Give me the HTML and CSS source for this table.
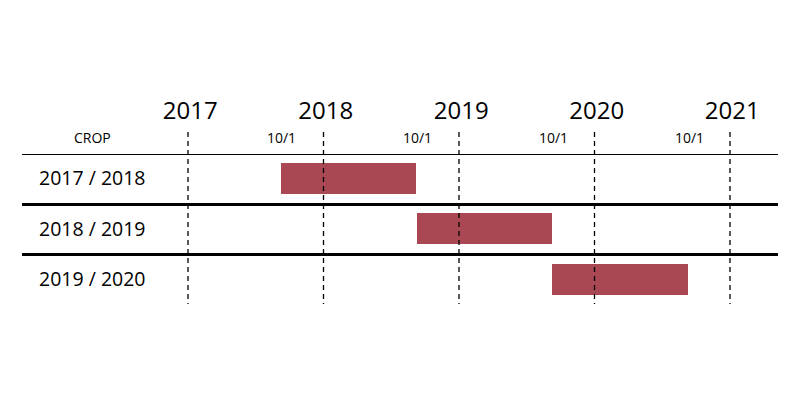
FILE: index.html
```html
<!DOCTYPE html>
<html>
<head>
<meta charset="utf-8">
<link rel="stylesheet" href="styles.css">
</head>
<body>
<div class="chart">
  <div class="header">
    <div class="years">
      <span class="year">2017</span>
      <span class="year">2018</span>
      <span class="year">2019</span>
      <span class="year">2020</span>
      <span class="year">2021</span>
    </div>
    <div class="sub">
      <span class="crop">CROP</span>
      <div class="marks">
        <span class="mark">10/1</span>
        <span class="mark">10/1</span>
        <span class="mark">10/1</span>
        <span class="mark">10/1</span>
      </div>
    </div>
  </div>
  <div class="row">
    <div class="label">2017 / 2018</div>
    <div class="track"><div class="bar" style="margin-left:92.7px"></div></div>
  </div>
  <div class="row">
    <div class="label">2018 / 2019</div>
    <div class="track"><div class="bar" style="margin-left:228.6px"></div></div>
  </div>
  <div class="row last">
    <div class="label">2019 / 2020</div>
    <div class="track"><div class="bar" style="margin-left:364.3px"></div></div>
  </div>
  <svg class="grid" width="600" height="172" viewBox="0 0 600 172">
    <g stroke="#000" stroke-width="1.3" stroke-dasharray="5 4">
      <line x1="1" y1="0" x2="1" y2="172"/>
      <line x1="136.5" y1="0" x2="136.5" y2="172"/>
      <line x1="272" y1="0" x2="272" y2="172"/>
      <line x1="407.5" y1="0" x2="407.5" y2="172"/>
      <line x1="543" y1="0" x2="543" y2="172"/>
    </g>
  </svg>
</div>
</body>
</html>
```
FILE: styles.css
```css
html, body {
  margin: 0;
  padding: 0;
  background: #fff;
}
body {
  font-family: "Open Sans", "Noto Sans", sans-serif;
  color: #000;
  width: 800px;
  height: 400px;
  overflow: hidden;
}
.chart {
  position: relative;
  margin-left: 22px;
  width: 756px;
  padding-top: 95px;
}
.header {
  border-bottom: 1.5px solid #000;
  padding-bottom: 8px;
}
.years {
  display: flex;
  margin-left: 98.5px;
  height: 30px;
  margin-bottom: 5px;
}
.year {
  width: 135.5px;
  flex: none;
  text-align: center;
  font-size: 24px;
  line-height: 30px;
  padding-left: 4px;
  box-sizing: border-box;
}
.sub {
  display: flex;
  height: 16px;
  font-size: 14px;
  line-height: 16px;
}
.crop {
  width: 166px;
  flex: none;
  padding-left: 52px;
  box-sizing: border-box;
}
.marks {
  display: flex;
  margin-left: 25.5px;
}
.mark {
  width: 136px;
  flex: none;
  text-align: center;
}
.row {
  display: flex;
  height: 47.5px;
  border-bottom: 3px solid #000;
}
.row.last {
  border-bottom: none;
  height: 47px;
}
.label {
  width: 166px;
  flex: none;
  padding-left: 17px;
  box-sizing: border-box;
  font-size: 19.5px;
  line-height: 46px;
}
.track {
  flex: 1;
  padding-top: 7.5px;
}
.bar {
  width: 135.5px;
  height: 31px;
  background: rgba(160, 52, 64, 0.9);
}
.grid {
  position: absolute;
  left: 165px;
  top: 132px;
  pointer-events: none;
}
```
